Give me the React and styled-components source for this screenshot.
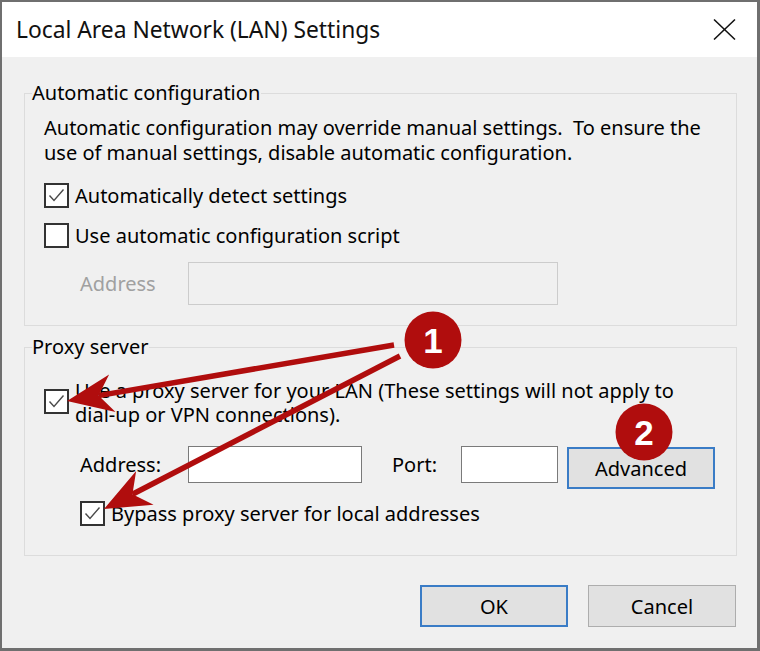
import React from "react";
import styled, { createGlobalStyle } from "styled-components";

const GlobalStyle = createGlobalStyle`
  html, body { margin: 0; padding: 0; background: #ffffff; }
  body { font-family: "Noto Sans", "Open Sans", sans-serif; }
  *, *::before, *::after { box-sizing: border-box; }
`;

const Page = styled.div`
  position: relative;
  width: 760px;
  height: 651px;
`;

const Window = styled.div`
  width: 760px;
  height: 651px;
  border: 2px solid #6f6f6f;
  border-right-width: 3px;
  border-bottom-width: 3px;
  background: #f0f0f0;
  display: flex;
  flex-direction: column;
  color: #000;
  font-size: 20px;
`;

const TitleBar = styled.div`
  height: 55px;
  flex: none;
  background: #ffffff;
  display: flex;
  align-items: center;
  justify-content: space-between;
  padding: 0 21px 0 14px;
`;

const Title = styled.div`
  font-size: 22.8px;
  color: #111;
`;

const CloseIcon = styled.svg`
  width: 23px;
  height: 21px;
  display: block;
`;

const Content = styled.div`
  flex: 1;
  padding: 24px 20px 0 22px;
  display: flex;
  flex-direction: column;
`;

const Group = styled.fieldset`
  margin: ${(p) => p.$mt || 0}px 0 0 0;
  padding: 0 0 ${(p) => p.$pb}px 7px;
  border: 1px solid #dcdcdc;
  min-width: 0;
`;

const Legend = styled.legend`
  padding: 0 1px 0 0;
  margin: 0;
  font-size: 20px;
  line-height: 24px;
`;

const GroupBody = styled.div`
  padding: ${(p) => p.$pt}px 0 0 12px;
  display: flex;
  flex-direction: column;
`;

const Para = styled.p`
  margin: 0;
  line-height: 25px;
  white-space: nowrap;
`;

const CheckRow = styled.label`
  display: flex;
  align-items: flex-start;
  gap: 6px;
  margin-top: ${(p) => p.$mt}px;
  margin-left: ${(p) => p.$ml || 0}px;
  line-height: ${(p) => p.$lh || 25}px;
  white-space: nowrap;
`;

const Box = styled.span`
  flex: none;
  width: 25px;
  height: 25px;
  margin-top: ${(p) => p.$offset || 0}px;
  border: 2px solid #333333;
  background: #ffffff;
  display: flex;
  align-items: center;
  justify-content: center;
`;

const FieldRow = styled.div`
  display: flex;
  align-items: flex-start;
  margin-top: ${(p) => p.$mt}px;
  margin-left: 36px;
`;

const FieldLabel = styled.span`
  width: ${(p) => p.$w}px;
  flex: none;
  height: ${(p) => p.$h}px;
  padding-left: ${(p) => p.$pl || 0}px;
  display: flex;
  align-items: center;
  color: ${(p) => (p.$disabled ? "#a0a0a0" : "#000")};
`;

const Input = styled.div`
  flex: none;
  width: ${(p) => p.$w}px;
  height: ${(p) => p.$h}px;
  border: 1px solid ${(p) => (p.$disabled ? "#cccccc" : "#7a7a7a")};
  background: ${(p) => (p.$disabled ? "#f0f0f0" : "#ffffff")};
`;

const Button = styled.button`
  flex: none;
  width: 148px;
  height: ${(p) => p.$h || 42}px;
  margin: ${(p) => p.$margin || 0};
  padding: 0;
  background: #e1e1e1;
  border: ${(p) => (p.$primary ? "2px solid #3a7cc6" : "1px solid #adadad")};
  font-family: inherit;
  font-size: 20px;
  color: #000;
`;

const Footer = styled.div`
  display: flex;
  justify-content: flex-end;
  gap: 20px;
  margin-top: 29px;
  padding-right: 1px;
`;

const Overlay = styled.svg`
  position: absolute;
  left: 0;
  top: 0;
  width: 760px;
  height: 651px;
  pointer-events: none;
`;

const Check = () => (
  <svg width="21" height="21" viewBox="0 0 21 21">
    <polyline points="3.5,10.5 8,15.5 17.5,4.5" fill="none" stroke="#4a4a4a" strokeWidth="1.4" />
  </svg>
);

const Checkbox = ({ checked, offset }) => <Box $offset={offset}>{checked && <Check />}</Box>;

const RED = "#b00d0d";

function Arrow({ tip, tail }) {
  const dx = tail[0] - tip[0];
  const dy = tail[1] - tip[1];
  const len = Math.hypot(dx, dy);
  const ux = dx / len;
  const uy = dy / len;
  const nx = -uy;
  const ny = ux;
  const L = 46;
  const W = 19;
  const b1 = [tip[0] + L * ux + W * nx, tip[1] + L * uy + W * ny];
  const b2 = [tip[0] + L * ux - W * nx, tip[1] + L * uy - W * ny];
  const notch = [tip[0] + 32 * ux, tip[1] + 32 * uy];
  return (
    <g>
      <line x1={notch[0]} y1={notch[1]} x2={tail[0]} y2={tail[1]} stroke={RED} strokeWidth="5.5" />
      <polygon
        points={`${tip[0]},${tip[1]} ${b1[0]},${b1[1]} ${notch[0]},${notch[1]} ${b2[0]},${b2[1]}`}
        fill={RED}
      />
    </g>
  );
}

function Badge({ cx, cy, n }) {
  return (
    <g>
      <circle cx={cx} cy={cy} r="28.5" fill={RED} />
      <text
        x={cx}
        y={cy + 13}
        textAnchor="middle"
        fill="#ffffff"
        fontFamily="'Liberation Sans', Arial, sans-serif"
        fontWeight="bold"
        fontSize="35"
      >
        {n}
      </text>
    </g>
  );
}

export default function App() {
  return (
    <Page>
      <GlobalStyle />
      <Window>
        <TitleBar>
          <Title>Local Area Network (LAN) Settings</Title>
          <CloseIcon viewBox="0 0 23 21">
            <line x1="1" y1="0.5" x2="22" y2="20.5" stroke="#111" strokeWidth="1.5" />
            <line x1="22" y1="0.5" x2="1" y2="20.5" stroke="#111" strokeWidth="1.5" />
          </CloseIcon>
        </TitleBar>
        <Content>
          <Group $pb={20}>
            <Legend>Automatic configuration</Legend>
            <GroupBody $pt={10}>
              <Para>
                Automatic configuration may override manual settings.&nbsp; To ensure the
                <br />
                use of manual settings, disable automatic configuration.
              </Para>
              <CheckRow $mt={18}>
                <Checkbox checked />
                Automatically detect settings
              </CheckRow>
              <CheckRow $mt={15}>
                <Checkbox />
                Use automatic configuration script
              </CheckRow>
              <FieldRow $mt={14}>
                <FieldLabel $w={108} $h={43} $disabled>
                  Address
                </FieldLabel>
                <Input $w={370} $h={43} $disabled />
              </FieldRow>
            </GroupBody>
          </Group>

          <Group $mt={9} $pb={29}>
            <Legend>Proxy server</Legend>
            <GroupBody $pt={20}>
              <CheckRow $mt={0} $lh={24}>
                <Checkbox checked offset={10} />
                <span>
                  Use a proxy server for your LAN (These settings will not apply to
                  <br />
                  dial-up or VPN connections).
                </span>
              </CheckRow>
              <FieldRow $mt={19}>
                <FieldLabel $w={108} $h={37}>
                  Address:
                </FieldLabel>
                <Input $w={174} $h={37} />
                <FieldLabel $w={99} $h={37} $pl={30}>
                  Port:
                </FieldLabel>
                <Input $w={97} $h={37} />
                <Button $primary $margin="1px 0 0 9px">
                  Advanced
                </Button>
              </FieldRow>
              <CheckRow $mt={12} $ml={36}>
                <Checkbox checked />
                Bypass proxy server for local addresses
              </CheckRow>
            </GroupBody>
          </Group>

          <Footer>
            <Button $primary>OK</Button>
            <Button>Cancel</Button>
          </Footer>
        </Content>
      </Window>
      <Overlay viewBox="0 0 760 651">
        <Arrow tip={[67, 401]} tail={[394, 345]} />
        <Arrow tip={[104, 509]} tail={[400, 356]} />
        <Badge cx={433} cy={340} n="1" />
        <Badge cx={644} cy={432} n="2" />
      </Overlay>
    </Page>
  );
}
